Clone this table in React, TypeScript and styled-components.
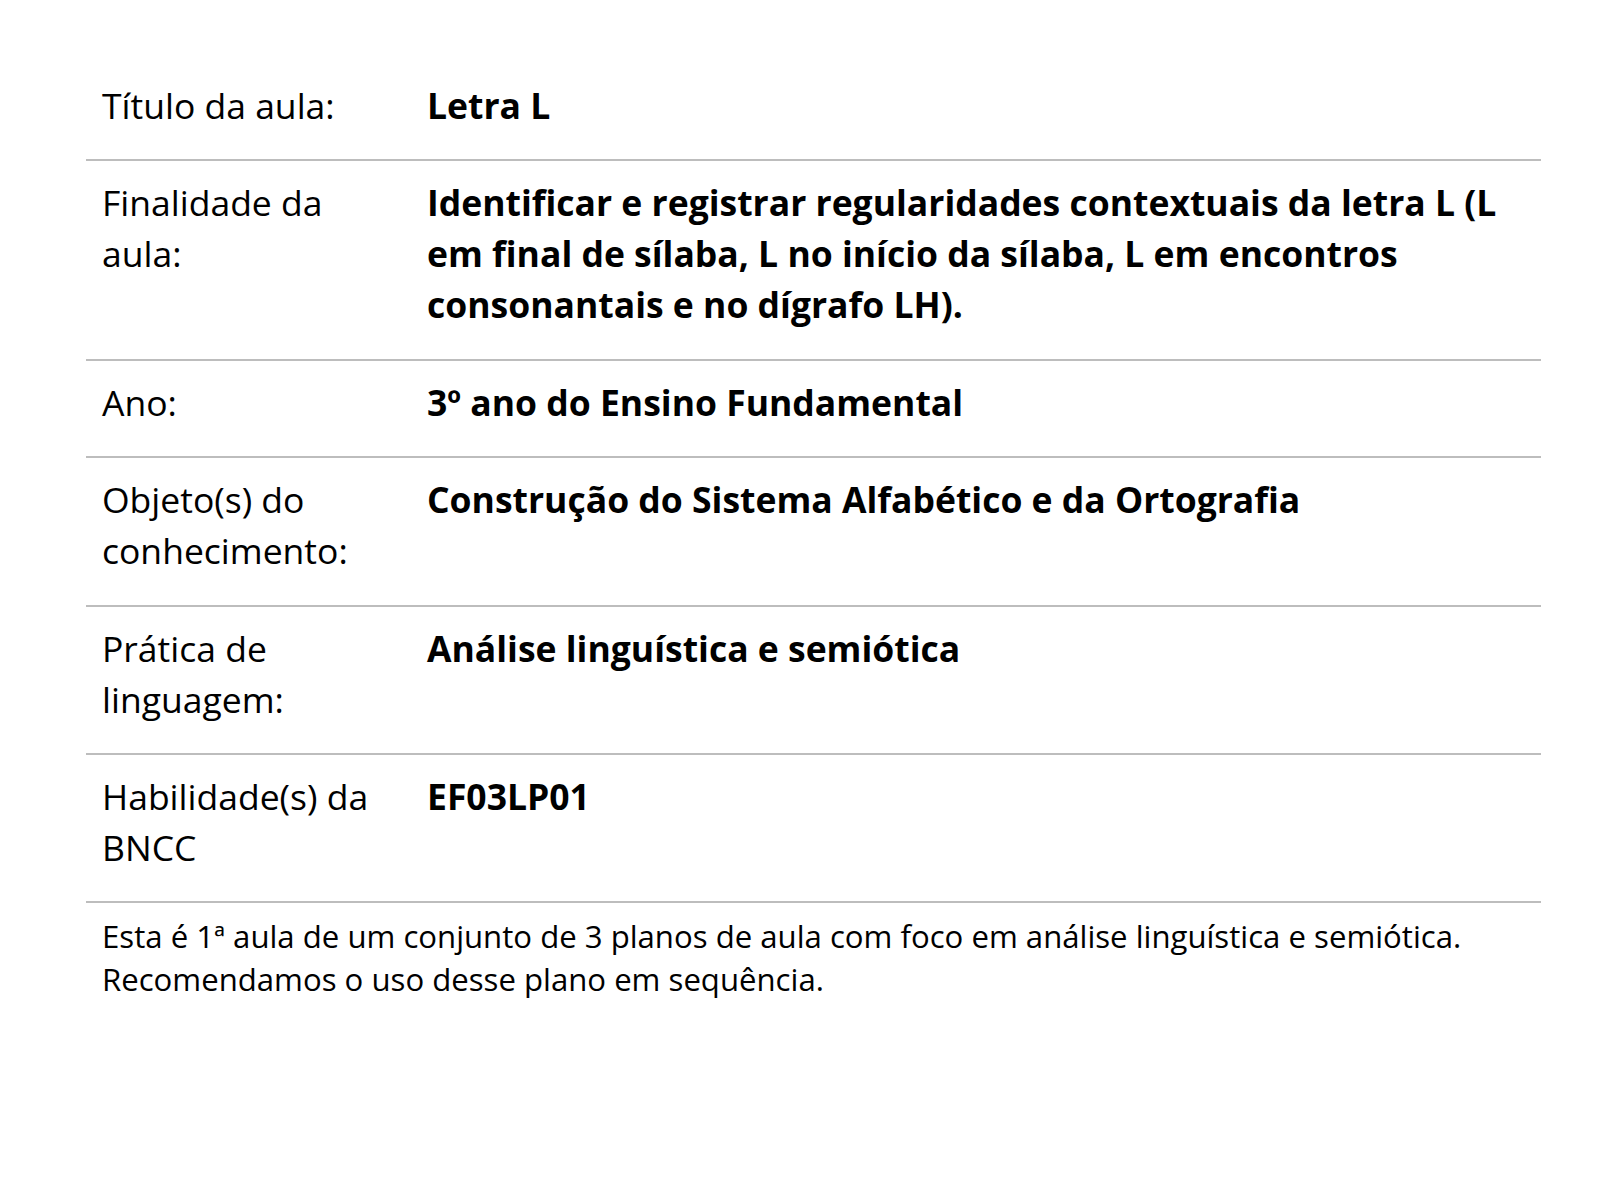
import React from "react";
import styled, { createGlobalStyle } from "styled-components";

const GlobalStyle = createGlobalStyle`
  html, body {
    margin: 0;
    padding: 0;
    background: #ffffff;
  }
  body {
    font-family: "Open Sans", "Noto Sans", sans-serif;
    color: #000000;
  }
`;

const Page = styled.main`
  padding: 64px 59px 0 86px;
`;

const Table = styled.div`
  display: flex;
  flex-direction: column;
  width: 1455px;
`;

const Row = styled.div`
  display: grid;
  grid-template-columns: 325px 1fr;
  border-bottom: 2px solid #bdbdbd;
`;

const Cell = styled.div<{ $bold?: boolean }>`
  padding: 16px 16px 28.4px 16px;
  font-size: 35.5px;
  line-height: 51px;
  font-weight: ${(p) => (p.$bold ? 700 : 400)};
`;

const Footer = styled.p`
  margin: 0;
  padding: 12px 16px 0 16px;
  font-size: 31.15px;
  line-height: 43px;
`;

const rows: { label: string; value: string }[] = [
  { label: "Título da aula:", value: "Letra L" },
  {
    label: "Finalidade da aula:",
    value:
      "Identificar e registrar regularidades contextuais da letra L (L em final de sílaba, L no início da sílaba, L em encontros consonantais e no dígrafo LH).",
  },
  { label: "Ano:", value: "3º ano do Ensino Fundamental" },
  {
    label: "Objeto(s) do conhecimento:",
    value: "Construção do Sistema Alfabético e da Ortografia",
  },
  { label: "Prática de linguagem:", value: "Análise linguística e semiótica" },
  { label: "Habilidade(s) da BNCC", value: "EF03LP01" },
];

export default function App() {
  return (
    <>
      <GlobalStyle />
      <Page>
        <Table>
          {rows.map((r) => (
            <Row key={r.label}>
              <Cell>{r.label}</Cell>
              <Cell $bold>{r.value}</Cell>
            </Row>
          ))}
          <Footer>
            Esta é 1ª aula de um conjunto de 3 planos de aula com foco em análise linguística e
            semiótica. Recomendamos o uso desse plano em sequência.
          </Footer>
        </Table>
      </Page>
    </>
  );
}
